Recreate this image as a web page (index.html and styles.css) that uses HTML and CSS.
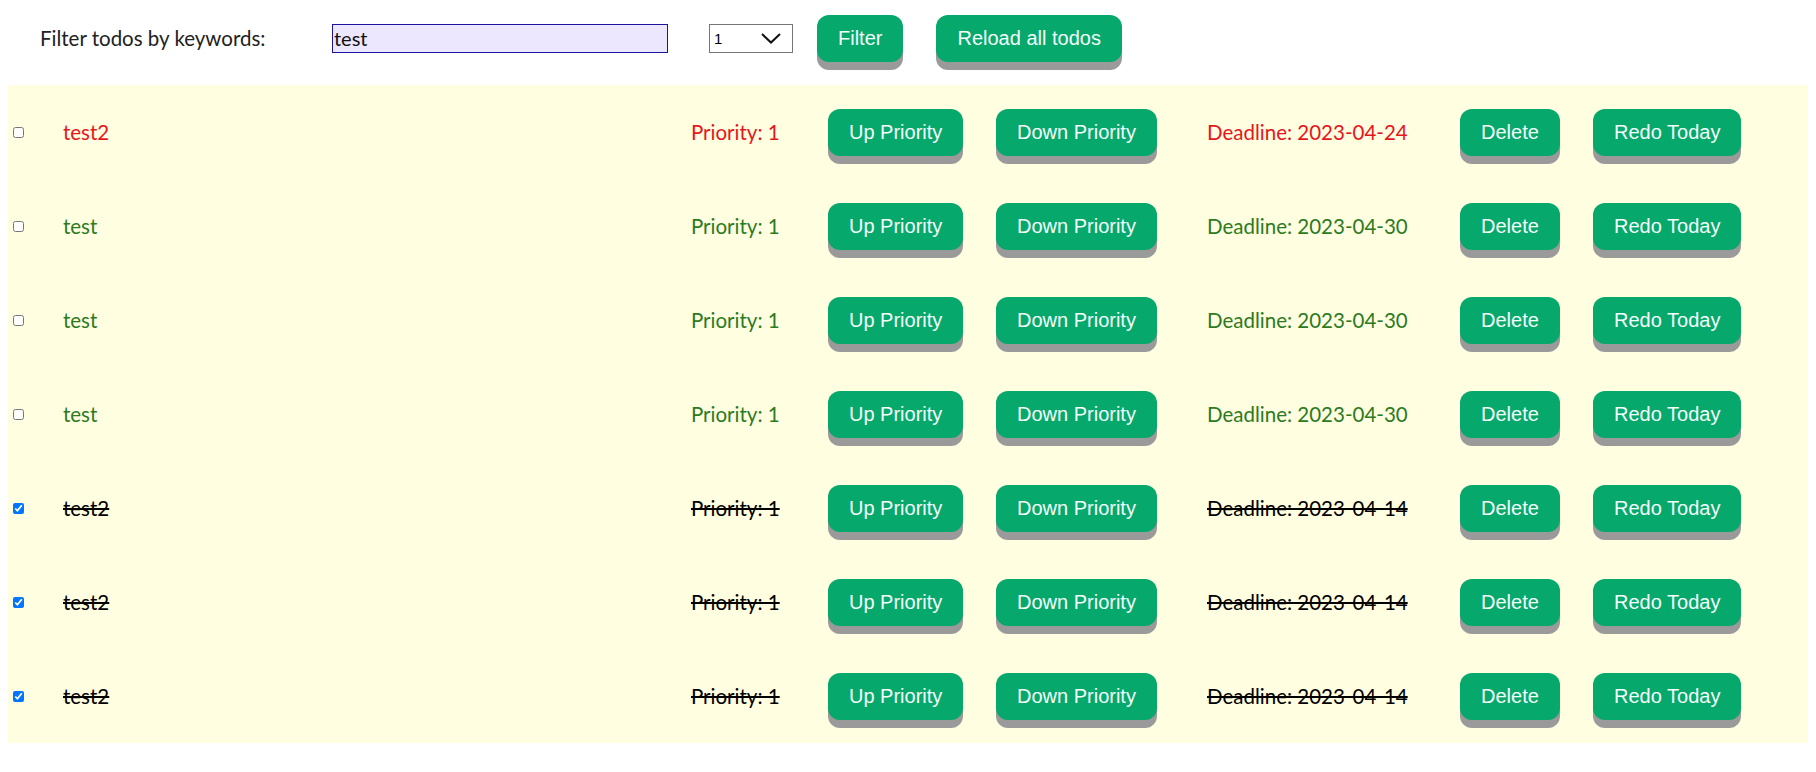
FILE: index.html
```html
<!DOCTYPE html>
<html>
<head>
<meta charset="utf-8">
<title>Todos</title>
<link rel="stylesheet" href="styles.css">
</head>
<body>
<div class="topbar">
  <label class="filter-label" for="kw">Filter todos by keywords:</label>
  <input id="kw" class="kw-input" type="text" value="test">
  <div class="select-wrap">
    <select class="prio-select"><option>1</option><option>2</option><option>3</option></select>
    <svg class="chev" width="20" height="11" viewBox="0 0 20 11"><path d="M1 1 L10 9.5 L19 1" fill="none" stroke="#111" stroke-width="2"/></svg>
  </div>
  <button class="btn btn-filter">Filter</button>
  <button class="btn btn-reload">Reload all todos</button>
</div>

<div class="todo-list">
  <div class="todo overdue">
    <div class="c-check"><input type="checkbox"></div>
    <div class="c-title">test2</div>
    <div class="c-prio">Priority: 1</div>
    <div class="c-up"><button class="btn">Up Priority</button></div>
    <div class="c-down"><button class="btn">Down Priority</button></div>
    <div class="c-deadline">Deadline: 2023-04-24</div>
    <div class="c-del"><button class="btn">Delete</button></div>
    <div class="c-redo"><button class="btn">Redo Today</button></div>
  </div>
  <div class="todo pending">
    <div class="c-check"><input type="checkbox"></div>
    <div class="c-title">test</div>
    <div class="c-prio">Priority: 1</div>
    <div class="c-up"><button class="btn">Up Priority</button></div>
    <div class="c-down"><button class="btn">Down Priority</button></div>
    <div class="c-deadline">Deadline: 2023-04-30</div>
    <div class="c-del"><button class="btn">Delete</button></div>
    <div class="c-redo"><button class="btn">Redo Today</button></div>
  </div>
  <div class="todo pending">
    <div class="c-check"><input type="checkbox"></div>
    <div class="c-title">test</div>
    <div class="c-prio">Priority: 1</div>
    <div class="c-up"><button class="btn">Up Priority</button></div>
    <div class="c-down"><button class="btn">Down Priority</button></div>
    <div class="c-deadline">Deadline: 2023-04-30</div>
    <div class="c-del"><button class="btn">Delete</button></div>
    <div class="c-redo"><button class="btn">Redo Today</button></div>
  </div>
  <div class="todo pending">
    <div class="c-check"><input type="checkbox"></div>
    <div class="c-title">test</div>
    <div class="c-prio">Priority: 1</div>
    <div class="c-up"><button class="btn">Up Priority</button></div>
    <div class="c-down"><button class="btn">Down Priority</button></div>
    <div class="c-deadline">Deadline: 2023-04-30</div>
    <div class="c-del"><button class="btn">Delete</button></div>
    <div class="c-redo"><button class="btn">Redo Today</button></div>
  </div>
  <div class="todo done">
    <div class="c-check"><input type="checkbox" checked></div>
    <div class="c-title">test2</div>
    <div class="c-prio">Priority: 1</div>
    <div class="c-up"><button class="btn">Up Priority</button></div>
    <div class="c-down"><button class="btn">Down Priority</button></div>
    <div class="c-deadline">Deadline: 2023-04-14</div>
    <div class="c-del"><button class="btn">Delete</button></div>
    <div class="c-redo"><button class="btn">Redo Today</button></div>
  </div>
  <div class="todo done">
    <div class="c-check"><input type="checkbox" checked></div>
    <div class="c-title">test2</div>
    <div class="c-prio">Priority: 1</div>
    <div class="c-up"><button class="btn">Up Priority</button></div>
    <div class="c-down"><button class="btn">Down Priority</button></div>
    <div class="c-deadline">Deadline: 2023-04-14</div>
    <div class="c-del"><button class="btn">Delete</button></div>
    <div class="c-redo"><button class="btn">Redo Today</button></div>
  </div>
  <div class="todo done">
    <div class="c-check"><input type="checkbox" checked></div>
    <div class="c-title">test2</div>
    <div class="c-prio">Priority: 1</div>
    <div class="c-up"><button class="btn">Up Priority</button></div>
    <div class="c-down"><button class="btn">Down Priority</button></div>
    <div class="c-deadline">Deadline: 2023-04-14</div>
    <div class="c-del"><button class="btn">Delete</button></div>
    <div class="c-redo"><button class="btn">Redo Today</button></div>
  </div>
</div>
</body>
</html>
```

FILE: styles.css
```css
html, body {
  overflow: hidden;
}
body {
  margin: 8px;
  background: #ffffff;
  font-family: Lato, "Noto Sans", sans-serif;
  font-size: 20.5px;
  color: #1a1a1a;
}

.topbar {
  display: flex;
  align-items: center;
  height: 60px;
  padding-left: 32px;
  margin-bottom: 17px;
}
.filter-label {
  width: 292px;
  font-size: 20.5px;
  color: #222;
}
.kw-input {
  box-sizing: border-box;
  width: 336px;
  height: 29px;
  margin: 0;
  padding: 0 1px;
  border: 1px solid #1a14a0;
  background: #ede6ff;
  font-family: Lato, "Noto Sans", sans-serif;
  font-size: 20px;
  color: #111;
  outline: none;
}
.select-wrap {
  position: relative;
  margin-left: 41px;
  width: 84px;
  height: 29px;
}
.prio-select {
  box-sizing: border-box;
  width: 84px;
  height: 29px;
  margin: 0;
  padding: 0 0 0 4px;
  appearance: none;
  -webkit-appearance: none;
  border: 1px solid #767676;
  border-radius: 0;
  background: #fff;
  font-family: "Liberation Sans", Arial, sans-serif;
  font-size: 15px;
  color: #000;
}
.chev {
  position: absolute;
  right: 12px;
  top: 9px;
  pointer-events: none;
}

.btn {
  box-sizing: border-box;
  height: 47px;
  margin: 0;
  padding: 0 21px;
  border: none;
  border-radius: 12px;
  background: #06a86c;
  color: #f4fffb;
  font-family: "Liberation Sans", Arial, sans-serif;
  font-size: 20px;
  line-height: 47px;
  box-shadow: 0 8px 0 #9a9a9a;
  cursor: pointer;
  white-space: nowrap;
}
.btn-filter {
  margin-left: 24px;
}
.btn-reload {
  margin-left: 33px;
}

.todo-list {
  background: #fffee0;
  margin-right: -8px;
}
.todo {
  display: grid;
  grid-template-columns: 55px 628px 137px 168px 211px 253px 133px 1fr;
  align-items: center;
  height: 94px;
  font-size: 20.5px;
}
.c-check input {
  display: block;
  width: 11px;
  height: 11px;
  margin: 0 0 0 5px;
}
.overdue { color: #e5161e; }
.pending { color: #2c7a22; }
.done { color: #000; }
.done .c-title,
.done .c-prio,
.done .c-deadline {
  text-decoration: line-through;
  text-decoration-thickness: 2px;
}
.c-title, .c-prio, .c-deadline {
  white-space: nowrap;
}
```
